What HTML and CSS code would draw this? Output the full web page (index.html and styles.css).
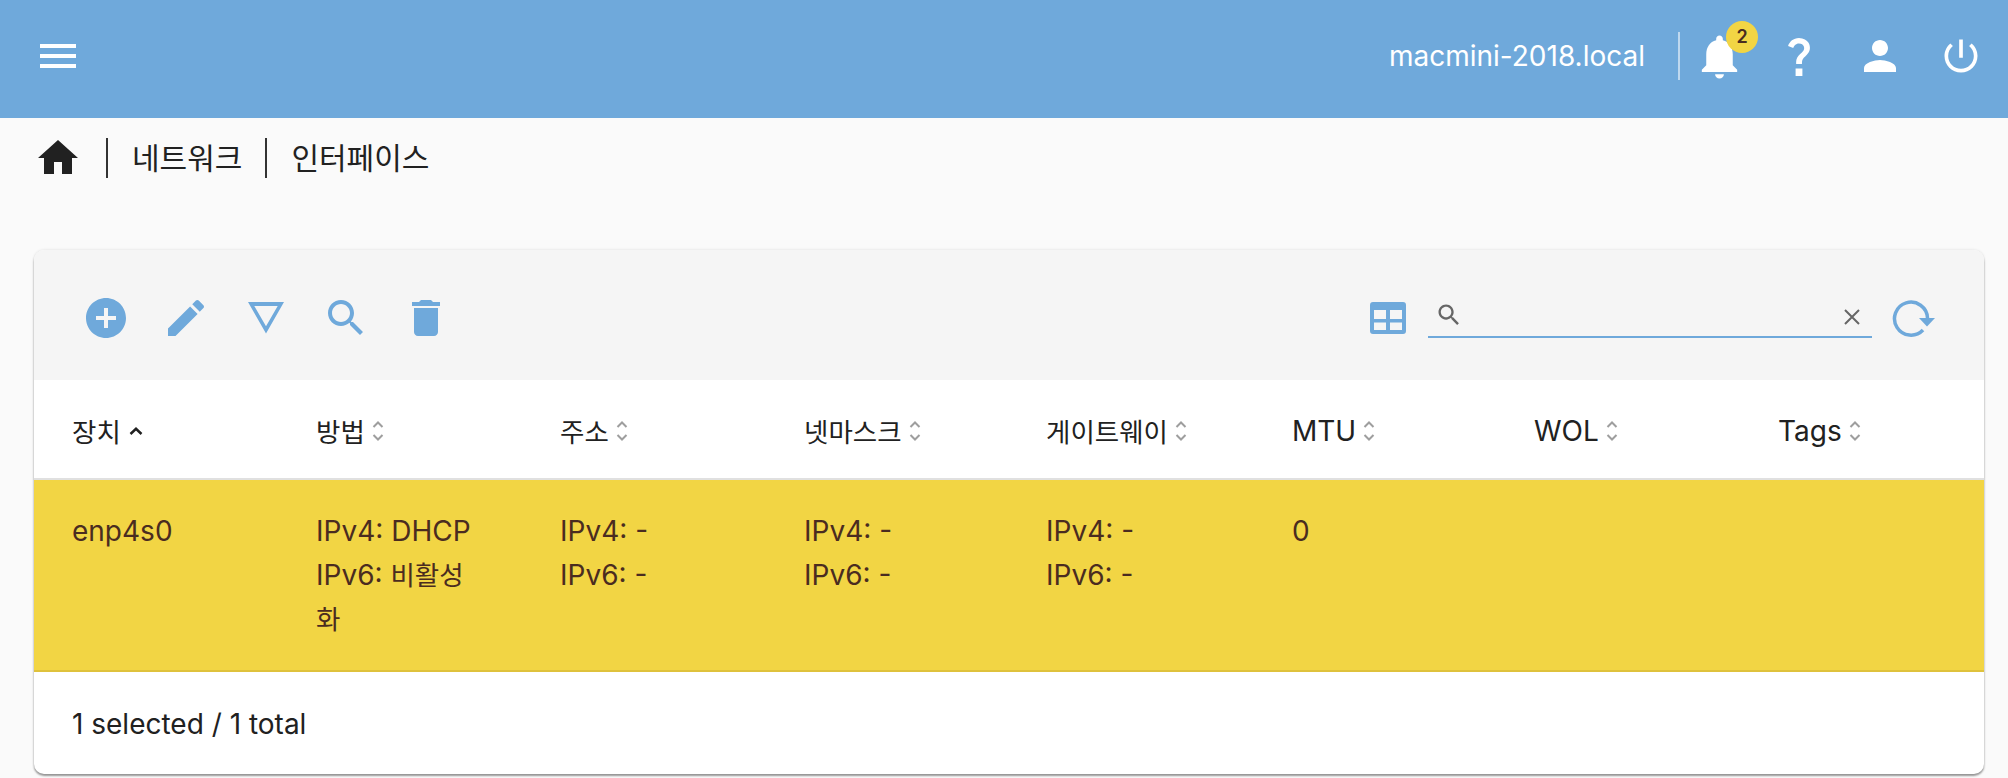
FILE: index.html
```html
<!DOCTYPE html>
<html lang="ko">
<head>
<meta charset="utf-8">
<title>인터페이스</title>
<link rel="stylesheet" href="styles.css">
</head>
<body>
<header class="topbar">
  <svg class="ic48 menu-ic" viewBox="0 0 24 24"><path d="M3 18h18v-2H3v2zm0-5h18v-2H3v2zm0-7v2h18V6H3z"/></svg>
  <div class="top-right">
    <span class="host">macmini-2018.local</span>
    <span class="top-div"></span>
    <span class="bell-wrap">
      <svg class="bell-ic" viewBox="0 0 24 24"><path d="M12 22c1.1 0 2-.9 2-2h-4c0 1.1.89 2 2 2zm6-6v-5c0-3.07-1.64-5.64-4.5-6.32V4c0-.83-.67-1.5-1.5-1.5s-1.5.67-1.5 1.5v.68C7.63 5.36 6 7.92 6 11v5l-2 2v1h16v-1l-2-2z"/></svg>
      <span class="badge">2</span>
    </span>
    <svg class="ic48 help-ic" viewBox="0 0 24 24"><path d="M11.07 12.85c.77-1.39 2.25-2.21 3.11-3.44.91-1.29.4-3.7-2.18-3.7-1.69 0-2.52 1.28-2.87 2.34L6.54 6.96C7.25 4.83 9.18 3 11.99 3c2.35 0 3.96 1.07 4.78 2.41.7 1.15 1.11 3.3.03 4.9-1.2 1.77-2.35 2.31-2.97 3.45-.25.46-.35.76-.35 2.24h-2.89c-.01-.78-.13-2.05.48-3.15zM10.3 18.2h3.4V22h-3.4z"/></svg>
    <svg class="ic48 user-ic" viewBox="0 0 24 24"><path d="M12 12c2.21 0 4-1.79 4-4s-1.79-4-4-4-4 1.79-4 4 1.79 4 4 4zm0 2c-2.67 0-8 1.34-8 4v2h16v-2c0-2.66-5.33-4-8-4z"/></svg>
    <svg class="power-ic" viewBox="0 0 24 24"><path d="M13 3h-2v10h2V3zm4.83 2.17l-1.42 1.42C17.99 7.86 19 9.81 19 12c0 3.87-3.13 7-7 7s-7-3.13-7-7c0-2.19 1.01-4.14 2.58-5.42L6.17 5.17C4.23 6.82 3 9.26 3 12c0 4.97 4.03 9 9 9s9-4.03 9-9c0-2.74-1.23-5.18-3.17-6.83z"/></svg>
  </div>
</header>

<nav class="crumbs">
  <svg class="ic48 home-ic" viewBox="0 0 24 24"><path d="M10 20v-6h4v6h5v-8h3L12 3 2 12h3v8z"/></svg>
  <span class="crumb first">네트워크</span>
  <span class="crumb">인터페이스</span>
</nav>

<main class="card">
  <div class="toolbar">
    <div class="tools">
      <svg class="ic48 blue" viewBox="0 0 24 24"><path d="M12 2C6.48 2 2 6.48 2 12s4.48 10 10 10 10-4.48 10-10S17.52 2 12 2zm5 11h-4v4h-2v-4H7v-2h4V7h2v4h4v2z"/></svg>
      <svg class="ic48 blue" viewBox="0 0 24 24"><path d="M3 17.25V21h3.75L17.81 9.94l-3.75-3.75L3 17.25zM20.71 7.04c.39-.39.39-1.02 0-1.41l-2.34-2.34c-.39-.39-1.02-.39-1.41 0l-1.83 1.83 3.75 3.75 1.83-1.83z"/></svg>
      <svg class="ic48 blue" viewBox="0 0 48 48"><path d="M6 8h36L24 39.500z M12.300 12 L24 32.200 35.700 12z" fill-rule="evenodd"/></svg>
      <svg class="ic48 blue" viewBox="0 0 24 24"><path d="M15.500 14h-.79l-.28-.27C15.410 12.590 16 11.110 16 9.500 16 5.910 13.090 3 9.500 3S3 5.910 3 9.500 5.910 16 9.500 16c1.610 0 3.090-.59 4.230-1.570l.27.28v.79l5 4.990L20.490 19l-4.990-5zm-6 0C7.010 14 5 11.990 5 9.500S7.010 5 9.500 5 14 7.010 14 9.500 11.990 14 9.500 14z"/></svg>
      <svg class="ic48 blue" viewBox="0 0 24 24"><path d="M6 19c0 1.100.9 2 2 2h8c1.100 0 2-.9 2-2V7H6v12zM19 4h-3.500l-1-1h-5l-1 1H5v2h14V4z"/></svg>
    </div>
    <div class="tools-right">
      <svg class="table-ic blue" viewBox="0 0 36 32"><path fill-rule="evenodd" d="M3 0h30a3 3 0 0 1 3 3v26a3 3 0 0 1-3 3H3a3 3 0 0 1-3-3V3a3 3 0 0 1 3-3zM4 8v9h12V8zM20 8v9h12V8zM4 20.500V28h12v-7.500zM20 20.500V28h12v-7.500z"/></svg>
      <div class="search">
        <svg class="search-ic" viewBox="0 0 24 24"><path d="M15.500 14h-.79l-.28-.27C15.410 12.590 16 11.110 16 9.500 16 5.910 13.090 3 9.500 3S3 5.910 3 9.500 5.910 16 9.500 16c1.610 0 3.090-.59 4.230-1.570l.27.28v.79l5 4.990L20.490 19l-4.990-5zm-6 0C7.010 14 5 11.990 5 9.500S7.010 5 9.500 5 14 7.010 14 9.500 11.990 14 9.500 14z"/></svg>
        <svg class="clear-ic" viewBox="0 0 16 16"><path d="M1 1l14 14M15 1L1 15"/></svg>
      </div>
      <svg class="refresh-ic" viewBox="0 0 44 38"><path class="refresh-arc" d="M31 31a16.500 16.500 0 1 1 4.500-12"/><path class="refresh-head" d="M27 19h16l-8 8.500z"/></svg>
    </div>
  </div>

  <div class="row head">
    <div class="cell"><span class="ko">장치</span><svg class="sort-on" viewBox="0 0 14 8"><path d="M1.500 7L7 1.800 12.500 7"/></svg></div>
    <div class="cell"><span class="ko">방법</span><svg class="sort" viewBox="0 0 12 22"><path d="M1.500 7L6 2.500 10.500 7M1.500 15L6 19.500 10.500 15"/></svg></div>
    <div class="cell"><span class="ko">주소</span><svg class="sort" viewBox="0 0 12 22"><path d="M1.500 7L6 2.500 10.500 7M1.500 15L6 19.500 10.500 15"/></svg></div>
    <div class="cell"><span class="ko">넷마스크</span><svg class="sort" viewBox="0 0 12 22"><path d="M1.500 7L6 2.500 10.500 7M1.500 15L6 19.500 10.500 15"/></svg></div>
    <div class="cell"><span class="ko">게이트웨이</span><svg class="sort" viewBox="0 0 12 22"><path d="M1.500 7L6 2.500 10.500 7M1.500 15L6 19.500 10.500 15"/></svg></div>
    <div class="cell">MTU<svg class="sort" viewBox="0 0 12 22"><path d="M1.500 7L6 2.500 10.500 7M1.500 15L6 19.500 10.500 15"/></svg></div>
    <div class="cell">WOL<svg class="sort" viewBox="0 0 12 22"><path d="M1.500 7L6 2.500 10.500 7M1.500 15L6 19.500 10.500 15"/></svg></div>
    <div class="cell">Tags<svg class="sort" viewBox="0 0 12 22"><path d="M1.500 7L6 2.500 10.500 7M1.500 15L6 19.500 10.500 15"/></svg></div>
  </div>

  <div class="row data">
    <div class="cell">enp4s0</div>
    <div class="cell">IPv4: DHCP<br>IPv6: <span class="ko">비활성<br>화</span></div>
    <div class="cell">IPv4: -<br>IPv6: -</div>
    <div class="cell">IPv4: -<br>IPv6: -</div>
    <div class="cell">IPv4: -<br>IPv6: -</div>
    <div class="cell">0</div>
    <div class="cell"></div>
    <div class="cell"></div>
  </div>

  <div class="foot">1 selected / 1 total</div>
</main>
</body>
</html>
```

FILE: styles.css
```css
* { box-sizing: border-box; }

html, body { height: 100%; }

body {
  margin: 0;
  background: #fafafa;
  color: #212121;
  font-family: "Inter", "Noto Sans CJK KR", sans-serif;
  font-size: 28px;
  overflow: hidden;
}

svg { display: block; flex: none; fill: currentColor; }

.ic48 { width: 48px; height: 48px; }

.blue { color: #6fa9db; }

.ko { font-size: 26.500px; }

/* top bar */
.topbar {
  height: 118px;
  background: #6fa9db;
  color: #fff;
  display: flex;
  align-items: center;
  justify-content: space-between;
  padding: 0 25px 6px 34px;
}

.top-right { display: flex; align-items: center; }

.host { font-size: 28px; margin-right: 33px; }

.top-div {
  width: 2px;
  height: 48px;
  background: rgba(255, 255, 255, .55);
  margin-right: 13px;
}

.bell-wrap { position: relative; display: block; width: 53px; height: 53px; }
.bell-ic { width: 53px; height: 53px; }

.badge {
  position: absolute;
  top: -9px;
  left: 33px;
  width: 32px;
  height: 32px;
  border-radius: 50%;
  background: #f2d544;
  color: #4a2c20;
  font-size: 18px;
  font-weight: 600;
  line-height: 32px;
  text-align: center;
}

.help-ic { margin-left: 29px; }
.user-ic { margin-left: 33px; }
.power-ic { width: 44px; height: 44px; margin-left: 35px; }

/* breadcrumbs */
.crumbs {
  display: flex;
  align-items: center;
  height: 48px;
  margin: 16px 0 68px 34px;
}

.crumb {
  font-size: 30px;
  line-height: 40px;
  border-left: 2px solid #333;
  padding-left: 24px;
  margin-right: 23px;
}

.crumb.first { margin-left: 24px; }

/* card */
.card {
  margin: 0 24px 0 34px;
  border-radius: 10px;
  background: #fff;
  box-shadow: 0 2px 2px rgba(0, 0, 0, .38), 0 0 3px rgba(0, 0, 0, .12);
  overflow: hidden;
}

.toolbar {
  height: 130px;
  background: #f5f5f5;
  display: flex;
  align-items: center;
  justify-content: space-between;
  padding: 6px 48px 0 48px;
}

.tools { display: flex; gap: 32px; }

.tools-right { display: flex; align-items: center; }

.table-ic { width: 36px; height: 32px; margin-right: 22px; }

.search {
  width: 444px;
  height: 40px;
  border-bottom: 2px solid #6fa9db;
  color: #666;
  display: flex;
  align-items: center;
  justify-content: space-between;
  padding: 0 12px 4px 7px;
}

.search-ic { width: 28px; height: 28px; }

.clear-ic { width: 16px; height: 16px; margin-top: 3px; fill: none; stroke: currentColor; stroke-width: 2; }

.refresh-ic { width: 44px; height: 38px; margin-left: 20px; }
.refresh-arc { fill: none; stroke: #6fa9db; stroke-width: 3.500; }
.refresh-head { fill: #6fa9db; }

/* table */
.row {
  display: grid;
  grid-template-columns: 244px 244px 244px 242px 246px 242px 244px 244px;
}

.cell { padding: 0 38px; }

.head {
  height: 100px;
  padding-top: 3px;
  align-items: center;
  border-bottom: 2px solid #e0e0e0;
}

.head .cell { display: flex; align-items: center; white-space: nowrap; padding-right: 0; }

.sort { width: 12px; height: 22px; margin-left: 7px; fill: none; stroke: #9e9e9e; stroke-width: 2; }

.sort-on { width: 14px; height: 8px; margin-left: 8px; fill: none; stroke: #212121; stroke-width: 2.500; }

.data {
  height: 192px;
  background: #f2d544;
  color: #4a2c20;
  line-height: 44px;
  padding: 29px 0 31px;
  border-bottom: 2px solid #dfc23c;
}

.foot {
  height: 102px;
  padding: 2px 38px 0;
  display: flex;
  align-items: center;
}
```
